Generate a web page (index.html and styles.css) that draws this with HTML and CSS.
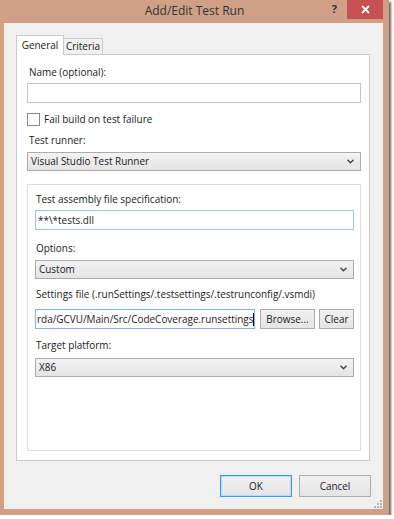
FILE: index.html
```
<!DOCTYPE html>
<html lang="en">
<head>
  <meta charset="UTF-8">
  <title>Add/Edit Test Run</title>
  <link rel="stylesheet" href="styles.css">
</head>
<body>
  <div class="window">
    <div class="titlebar">
      <span></span>
      <div class="title">Add/Edit Test Run</div>
      <div class="controls">
        <span class="help">?</span>
        <span class="close">
          <svg width="9" height="9" viewBox="0 0 9 9"><path d="M1 1L8 8M8 1L1 8" stroke="#fff" stroke-width="1.8"/></svg>
        </span>
      </div>
    </div>

    <div class="client">
      <div class="tabs">
        <div class="tab active">General</div>
        <div class="tab">Criteria</div>
      </div>

      <div class="panel">
        <div class="label first">Name (optional):</div>
        <div class="textbox"></div>

        <div class="check-row"><span class="checkbox"></span>Fail build on test failure</div>

        <div class="label runner">Test runner:</div>
        <div class="select">Visual Studio Test Runner
          <svg class="chevron" width="7" height="5" viewBox="0 0 7 5"><path d="M0.5 0.8L3.5 3.8L6.5 0.8" fill="none" stroke="#444" stroke-width="1.4"/></svg>
        </div>

        <div class="group">
          <div class="label">Test assembly file specification:</div>
          <div class="textbox blue">**\*tests.dll</div>

          <div class="label">Options:</div>
          <div class="select">Custom
            <svg class="chevron" width="7" height="5" viewBox="0 0 7 5"><path d="M0.5 0.8L3.5 3.8L6.5 0.8" fill="none" stroke="#444" stroke-width="1.4"/></svg>
          </div>

          <div class="label">Settings file (.runSettings/.testsettings/.testrunconfig/.vsmdi)</div>
          <div class="file-row">
            <div class="textbox focused">rda/GCVU/Main/Src/CodeCoverage.runsettings<span class="caret"></span></div>
            <button class="btn browse">Browse...</button>
            <button class="btn clear">Clear</button>
          </div>

          <div class="label target">Target platform:</div>
          <div class="select">X86
            <svg class="chevron" width="7" height="5" viewBox="0 0 7 5"><path d="M0.5 0.8L3.5 3.8L6.5 0.8" fill="none" stroke="#444" stroke-width="1.4"/></svg>
          </div>
        </div>
      </div>

      <div class="buttons">
        <button class="btn dialog default">OK</button>
        <button class="btn dialog">Cancel</button>
      </div>

      <svg class="grip" width="9" height="9" viewBox="0 0 9 9">
        <rect x="7" y="1" width="2" height="2" fill="#b5b5b5"/>
        <rect x="4" y="4" width="2" height="2" fill="#b5b5b5"/>
        <rect x="7" y="4" width="2" height="2" fill="#b5b5b5"/>
        <rect x="1" y="7" width="2" height="2" fill="#b5b5b5"/>
        <rect x="4" y="7" width="2" height="2" fill="#b5b5b5"/>
        <rect x="7" y="7" width="2" height="2" fill="#b5b5b5"/>
      </svg>
    </div>
  </div>
</body>
</html>
```

FILE: styles.css
```
body {
  margin: 0;
  background-color: #ffffff;
  font-family: 'Open Sans', 'Noto Sans', sans-serif;
  font-size: 9.95px;
  color: #1a1a1a;
}

.window {
  width: 389px;
  height: 515px;
  background-color: #cfa086;
  display: flex;
  flex-direction: column;
  box-shadow: 2px 2px 2px rgba(0, 0, 0, 0.6);
}

/* title bar */
.titlebar {
  height: 23px;
  display: grid;
  grid-template-columns: 1fr auto 1fr;
}

.title {
  font-size: 12px;
  color: #333;
  line-height: 22px;
}

.controls {
  display: flex;
  justify-content: flex-end;
  align-items: flex-start;
  margin-right: 6px;
}

.help {
  font-size: 11px;
  font-weight: bold;
  color: #333;
  line-height: 18px;
  margin-right: 10px;
}

.close {
  width: 36px;
  height: 19px;
  background-color: #c75050;
  display: flex;
  align-items: center;
  justify-content: center;
}

/* client area */
.client {
  flex: 1;
  margin: 0 6px 6px 4px;
  background-color: #f0f0f0;
  padding: 12px 12px 12px 12px;
  display: flex;
  flex-direction: column;
  position: relative;
}

.tabs {
  display: flex;
  align-items: flex-end;
  height: 19px;
}

.tab {
  height: 16px;
  line-height: 15px;
  border: 1px solid #c9c9c9;
  border-bottom: none;
  background-color: #f0f0f0;
  box-sizing: border-box;
  text-align: center;
  width: 40px;
  margin-left: -1px;
}

.tab.active {
  height: 20px;
  line-height: 19px;
  width: 48px;
  margin-left: 0;
  margin-bottom: -1px;
  background-color: #fff;
  position: relative;
  z-index: 1;
}

.panel {
  flex: 1;
  background-color: #fff;
  border: 1px solid #c9c9c9;
  margin-right: 1px;
  padding: 9px 8px 9px 10px;
  display: flex;
  flex-direction: column;
}

.label {
  line-height: 16px;
  padding-left: 2px;
  margin-top: 7px;
  margin-bottom: 4px;
}

.label.first {
  margin-top: 0;
  margin-bottom: 3px;
}

.label.runner {
  margin-top: 5px;
}

.textbox {
  height: 20px;
  box-sizing: border-box;
  border: 1px solid #c3c5cc;
  background-color: #fff;
  padding-left: 2px;
  line-height: 18px;
  white-space: nowrap;
  overflow: hidden;
}

.textbox.blue {
  border-color: #a8c2e2;
  margin-bottom: 3px;
}

.textbox.focused {
  flex: 1;
  border-color: #7eb4ea;
  padding-left: 1px;
}

.caret {
  display: inline-block;
  width: 1px;
  height: 13px;
  background-color: #000;
  vertical-align: -3px;
}

.check-row {
  display: flex;
  align-items: center;
  height: 16px;
  margin-top: 8px;
}

.checkbox {
  width: 11px;
  height: 11px;
  border: 1px solid #8a8a8a;
  background-color: #fff;
  margin-right: 4px;
}

.select {
  height: 19px;
  box-sizing: border-box;
  border: 1px solid #acacac;
  background: linear-gradient(#f3f3f3, #e4e4e4);
  padding: 0 6px 0 3px;
  line-height: 17px;
  display: flex;
  justify-content: space-between;
  align-items: center;
}

.group {
  flex: 1;
  margin-top: 13px;
  border: 1px solid #dedede;
  padding: 6px 6px 0 7px;
  display: flex;
  flex-direction: column;
}

.group .label {
  padding-left: 1px;
}

.group .label:first-child {
  margin-top: 0;
  margin-bottom: 3px;
}

.label.target {
  margin-top: 8px;
  margin-bottom: 5px;
}

.file-row {
  display: flex;
  gap: 5px;
  margin-top: 3px;
}

.btn {
  font-family: inherit;
  font-size: inherit;
  color: #1a1a1a;
  height: 20px;
  box-sizing: border-box;
  border: 1px solid #acacac;
  background: linear-gradient(#f0f0f0, #e5e5e5);
  padding: 0;
}

.browse {
  width: 55px;
}

.clear {
  width: 35px;
  margin-left: -1px;
}

.buttons {
  display: flex;
  justify-content: flex-end;
  gap: 7px;
  margin-top: 14px;
}

.btn.dialog {
  width: 72px;
  height: 22px;
}

.btn.default {
  border-color: #3399ff;
  box-shadow: inset 0 0 0 1px #b9dcff;
}

.grip {
  position: absolute;
  right: 1px;
  bottom: 1px;
}
```
